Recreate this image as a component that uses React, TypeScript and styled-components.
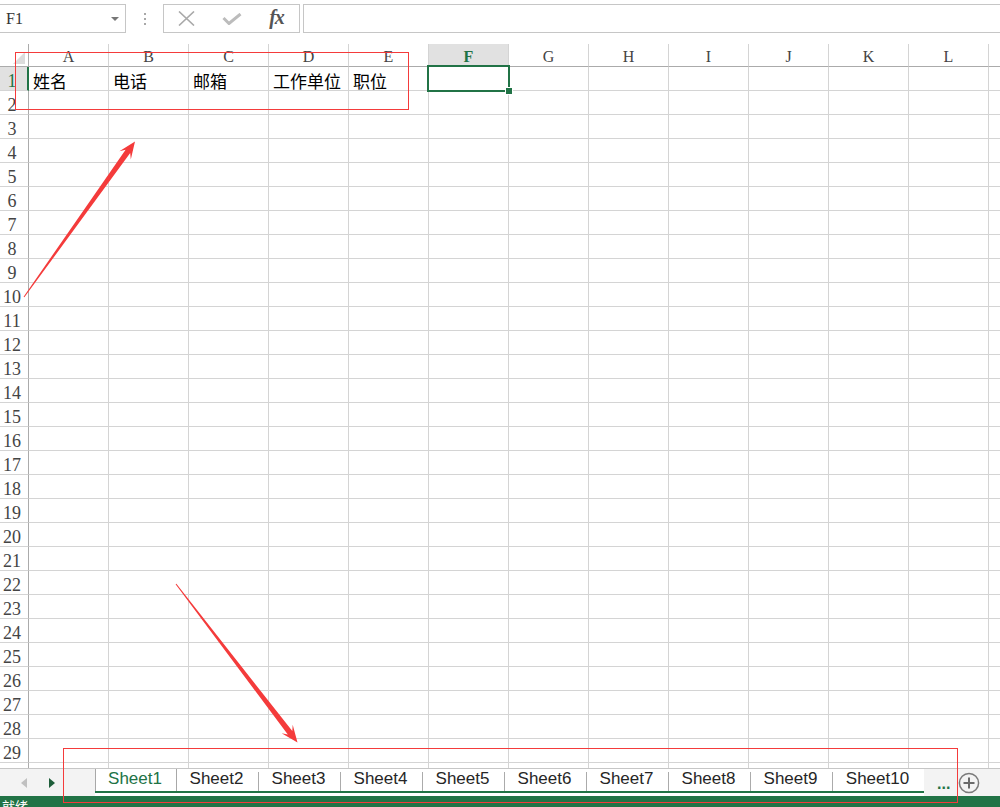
import React from 'react';
import styled, { createGlobalStyle, css } from 'styled-components';

const GREEN = '#217346';
const GRID = '#d4d4d4';
const HEAD_LINE = '#ababab';
const RED = '#f43b3b';

const Global = createGlobalStyle`
  html, body { margin: 0; padding: 0; background: #fff; overflow: hidden; }
  #root { height: 100vh; }
`;

const Page = styled.div`
  position: relative;
  width: 1000px;
  height: 807px;
  display: flex;
  flex-direction: column;
  overflow: hidden;
  background: #fff;
  font-family: "Liberation Sans", sans-serif;
`;

/* ---------- formula bar ---------- */
const FormulaBar = styled.div`
  flex: none;
  height: 44px;
  box-sizing: border-box;
  padding-top: 4px;
  display: flex;
  align-items: flex-start;
`;

const NameBox = styled.div`
  width: 127px;
  height: 29px;
  margin-left: -1px;
  box-sizing: border-box;
  border: 1px solid #c6c6c6;
  display: flex;
  align-items: center;
  justify-content: space-between;
  padding: 1px 6px 0 6px;
  font-family: "Liberation Serif", serif;
  font-size: 16px;
  color: #333;
`;

const Caret = styled.span`
  width: 0;
  height: 0;
  border-left: 4px solid transparent;
  border-right: 4px solid transparent;
  border-top: 4px solid #777;
`;

const Grip = styled.div`
  width: 37px;
  height: 29px;
  display: flex;
  flex-direction: column;
  align-items: center;
  justify-content: center;
  gap: 3px;
`;

const GripDot = styled.span`
  width: 2px;
  height: 2px;
  background: #a8a8a8;
`;

const ButtonsBox = styled.div`
  width: 137px;
  height: 29px;
  box-sizing: border-box;
  border: 1px solid #c6c6c6;
  display: flex;
`;

const IconSlot = styled.div`
  width: 45px;
  height: 27px;
  display: flex;
  align-items: center;
  justify-content: center;
`;

const Fx = styled.span`
  font-family: "Liberation Serif", serif;
  font-style: italic;
  font-weight: bold;
  font-size: 20px;
  color: #555;
  letter-spacing: -1px;
  margin-top: -2px;
`;

const FormulaInput = styled.div`
  flex: 1;
  height: 29px;
  margin-left: 3px;
  margin-right: -1px;
  box-sizing: border-box;
  border: 1px solid #c6c6c6;
`;

/* ---------- sheet grid ---------- */
const SheetArea = styled.div`
  flex: none;
  height: 724px;
  overflow: hidden;
`;

const Grid = styled.div`
  display: grid;
  grid-template-columns: 29px repeat(13, 80px);
  grid-template-rows: 23px;
  grid-auto-rows: 24px;
  width: max-content;
`;

const Corner = styled.div`
  box-sizing: border-box;
  border-right: 1px solid ${HEAD_LINE};
  border-bottom: 1px solid ${HEAD_LINE};
  display: flex;
  align-items: flex-end;
  justify-content: flex-end;
  padding: 0 3px 2px 0;
`;

const CornerTriangle = styled.span`
  width: 0;
  height: 0;
  border-left: 12px solid transparent;
  border-bottom: 12px solid #dcdcdc;
`;

const ColHead = styled.div<{ $active?: boolean }>`
  box-sizing: border-box;
  border-right: 1px solid ${GRID};
  border-bottom: 1px solid ${HEAD_LINE};
  display: flex;
  align-items: center;
  justify-content: center;
  padding-top: 3px;
  font-family: "Liberation Serif", serif;
  font-size: 16px;
  color: #444;
  ${(p) =>
    p.$active &&
    css`
      background: #e1e1e1;
      color: ${GREEN};
      font-weight: bold;
    `}
`;

const RowHead = styled.div<{ $active?: boolean }>`
  box-sizing: border-box;
  border-right: 1px solid ${HEAD_LINE};
  border-bottom: 1px solid ${GRID};
  display: flex;
  align-items: center;
  justify-content: center;
  padding: 4px 4px 0 0;
  font-family: "Liberation Serif", serif;
  font-size: 18px;
  line-height: 1;
  color: #444;
  ${(p) =>
    p.$active &&
    css`
      background: #e1e1e1;
      color: ${GREEN};
      border-right: 2px solid ${GREEN};
      padding-right: 3px;
    `}
`;

const Cell = styled.div<{ $selected?: boolean }>`
  position: relative;
  box-sizing: border-box;
  border-right: 1px solid ${GRID};
  border-bottom: 1px solid ${GRID};
  display: flex;
  align-items: center;
  padding: 3px 0 0 4px;
  font-family: "Noto Sans CJK SC", "Noto Sans CJK JP", sans-serif;
  font-size: 17px;
  line-height: 1;
  color: #000;
  white-space: nowrap;
  ${(p) =>
    p.$selected &&
    css`
      z-index: 2;
      &::after {
        content: '';
        position: absolute;
        left: -2px;
        top: -2px;
        right: -2px;
        bottom: -2px;
        border: 2px solid ${GREEN};
      }
      &::before {
        content: '';
        position: absolute;
        right: -5px;
        bottom: -5px;
        width: 6px;
        height: 6px;
        background: ${GREEN};
        border: 1px solid #fff;
        z-index: 3;
      }
    `}
`;

/* ---------- sheet tabs ---------- */
const TabBar = styled.div`
  flex: none;
  height: 28px;
  box-sizing: border-box;
  border-top: 1px solid #c6c6c6;
  background: #f3f3f3;
  display: flex;
`;

const NavArea = styled.div`
  width: 95px;
  display: flex;
  align-items: center;
  padding-left: 21px;
  gap: 22px;
  box-sizing: border-box;
`;

const NavArrow = styled.span<{ $dir: 'left' | 'right'; $enabled?: boolean }>`
  width: 0;
  height: 0;
  border-top: 5px solid transparent;
  border-bottom: 5px solid transparent;
  ${(p) =>
    p.$dir === 'left'
      ? css`border-right: 6px solid ${p.$enabled ? '#1e5e3a' : '#c0c0c0'};`
      : css`border-left: 6px solid ${p.$enabled ? '#1e5e3a' : '#c0c0c0'};`}
`;

const TabsStrip = styled.div`
  background: #fff;
  display: flex;
  flex-direction: column;
`;

const TabsRow = styled.div`
  height: 24px;
  box-sizing: border-box;
  border-bottom: 2px solid ${GREEN};
  display: flex;
`;

const Tab = styled.div<{ $active?: boolean; $w?: number }>`
  width: ${(p) => p.$w ?? 81}px;
  height: 22px;
  box-sizing: border-box;
  display: flex;
  align-items: center;
  justify-content: center;
  padding: 0 2px 3px 0;
  font-size: 17px;
  color: #262626;
  white-space: nowrap;
  ${(p) =>
    p.$active &&
    css`
      color: ${GREEN};
      border-left: 1px solid #a8a8a8;
      border-right: 1px solid #a8a8a8;
    `}
`;

const TabSep = styled.span`
  width: 1px;
  height: 19px;
  align-self: flex-end;
  background: #ababab;
`;

const TabTools = styled.div`
  flex: 1;
  display: flex;
  align-items: center;
  padding-left: 13px;
  gap: 8px;
`;

const More = styled.span`
  color: ${GREEN};
  font-size: 16px;
  font-weight: bold;
  margin-top: 2px;
`;

const StatusBar = styled.div`
  flex: 1;
  background: ${GREEN};
  color: #fff;
  font-family: "Noto Sans CJK SC", sans-serif;
  font-size: 13px;
  line-height: 13px;
  padding: 3px 0 0 2px;
  overflow: hidden;
`;

/* ---------- annotation overlay ---------- */
const Overlay = styled.svg`
  position: absolute;
  left: 0;
  top: 0;
  width: 1000px;
  height: 807px;
  pointer-events: none;
  z-index: 10;
`;

function arrowPoints(
  tx: number,
  ty: number,
  hx: number,
  hy: number,
  headLen = 17,
  headHalf = 7,
  shaftHalf = 2.8,
  tailHalf = 0.5
): string {
  const dx = hx - tx;
  const dy = hy - ty;
  const L = Math.hypot(dx, dy);
  const ux = dx / L;
  const uy = dy / L;
  const nx = -uy;
  const ny = ux;
  const bx = hx - ux * headLen;
  const by = hy - uy * headLen;
  const sx = hx - ux * headLen * 0.72;
  const sy = hy - uy * headLen * 0.72;
  const pts: [number, number][] = [
    [tx + nx * tailHalf, ty + ny * tailHalf],
    [sx + nx * shaftHalf, sy + ny * shaftHalf],
    [bx + nx * headHalf, by + ny * headHalf],
    [hx, hy],
    [bx - nx * headHalf, by - ny * headHalf],
    [sx - nx * shaftHalf, sy - ny * shaftHalf],
    [tx - nx * tailHalf, ty - ny * tailHalf],
  ];
  return pts.map((p) => `${p[0].toFixed(1)},${p[1].toFixed(1)}`).join(' ');
}

const COLS = ['A', 'B', 'C', 'D', 'E', 'F', 'G', 'H', 'I', 'J', 'K', 'L', 'M'];
const ROW1: Record<string, string> = {
  A: '姓名',
  B: '电话',
  C: '邮箱',
  D: '工作单位',
  E: '职位',
};
const ROWS = Array.from({ length: 30 }, (_, i) => i + 1);
const SHEETS = Array.from({ length: 10 }, (_, i) => `Sheet${i + 1}`);

export default function App() {
  return (
    <Page>
      <Global />
      <FormulaBar>
        <NameBox>
          <span>F1</span>
          <Caret />
        </NameBox>
        <Grip>
          <GripDot />
          <GripDot />
          <GripDot />
        </Grip>
        <ButtonsBox>
          <IconSlot>
            <svg width="17" height="15" viewBox="0 0 17 15">
              <path d="M1 0.5 L16 14.5 M16 0.5 L1 14.5" stroke="#a9a9a9" strokeWidth="1.6" fill="none" />
            </svg>
          </IconSlot>
          <IconSlot>
            <svg width="20" height="12" viewBox="0 0 20 12">
              <path d="M1.5 5 L7 10.5 L18.5 1" stroke="#bcbcbc" strokeWidth="3" fill="none" />
            </svg>
          </IconSlot>
          <IconSlot>
            <Fx>fx</Fx>
          </IconSlot>
        </ButtonsBox>
        <FormulaInput />
      </FormulaBar>

      <SheetArea>
        <Grid>
          <Corner>
            <CornerTriangle />
          </Corner>
          {COLS.map((c) => (
            <ColHead key={c} $active={c === 'F'}>
              {c}
            </ColHead>
          ))}
          {ROWS.map((r) => (
            <React.Fragment key={r}>
              <RowHead $active={r === 1}>{r}</RowHead>
              {COLS.map((c) => (
                <Cell key={c} $selected={r === 1 && c === 'F'}>
                  {r === 1 ? ROW1[c] ?? '' : ''}
                </Cell>
              ))}
            </React.Fragment>
          ))}
        </Grid>
      </SheetArea>

      <TabBar>
        <NavArea>
          <NavArrow $dir="left" />
          <NavArrow $dir="right" $enabled />
        </NavArea>
        <TabsStrip>
          <TabsRow>
            {SHEETS.map((s, i) => (
              <React.Fragment key={s}>
                {i > 1 && <TabSep />}
                <Tab $active={i === 0} $w={i === 0 ? 82 : i === 9 ? 91 : 81}>
                  {s}
                </Tab>
              </React.Fragment>
            ))}
          </TabsRow>
        </TabsStrip>
        <TabTools>
          <More>...</More>
          <svg width="22" height="22" viewBox="0 0 22 22">
            <circle cx="11" cy="11" r="9.6" stroke="#7a7a7a" strokeWidth="1.5" fill="none" />
            <path d="M11 5.5 V16.5 M5.5 11 H16.5" stroke="#6a6a6a" strokeWidth="2" />
          </svg>
        </TabTools>
      </TabBar>
      <StatusBar>就绪</StatusBar>

      <Overlay viewBox="0 0 1000 807">
        <rect x="15.5" y="52.5" width="393" height="57" fill="none" stroke={RED} strokeWidth="1" />
        <rect x="63.5" y="748.5" width="894" height="54" fill="none" stroke={RED} strokeWidth="1" />
        <polygon points={arrowPoints(24, 297, 135, 141.5)} fill={RED} />
        <polygon points={arrowPoints(176, 584, 297.5, 742.5)} fill={RED} />
      </Overlay>
    </Page>
  );
}
